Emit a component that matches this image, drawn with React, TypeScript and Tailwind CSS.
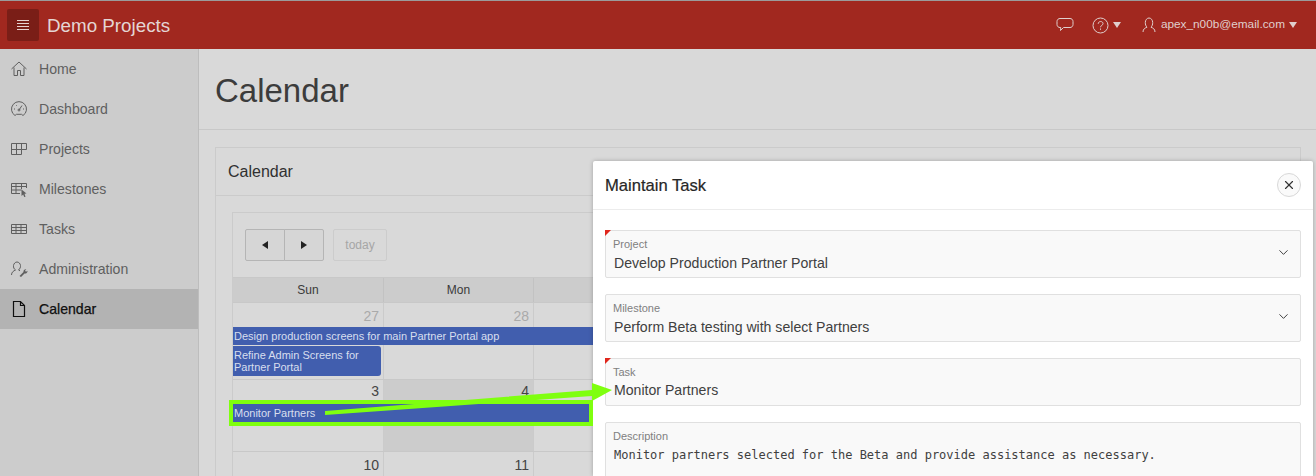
import { ChevronDown, X } from 'lucide-react';
import type { ReactNode } from 'react';

const sans = 'font-["Liberation_Sans",Arial,sans-serif]';

function Icon({ children }: { children: ReactNode }) {
  return (
    <svg width="18" height="18" viewBox="0 0 18 18" fill="none" stroke="currentColor" strokeWidth="1" className="shrink-0">
      {children}
    </svg>
  );
}

const navItems: { label: string; icon: ReactNode; active?: boolean }[] = [
  {
    label: 'Home',
    icon: <Icon><path d="M1.500 9 9 2l7.500 7M4 7.500v8h3.500v-5h3v5H14v-8" /></Icon>,
  },
  {
    label: 'Dashboard',
    icon: <Icon><path d="M5 15.500a7.500 7.500 0 1 1 8 0l-1.500-1.200h-5z" /><path d="M9 10 12 5.500M4 9h1M13 9h1M6 5l.7.7" /><circle cx="9" cy="10" r="1" /></Icon>,
  },
  {
    label: 'Projects',
    icon: <Icon><path d="M1.500 3.500h15v6h-5v5h-10zM1.500 9.500h10M6.500 3.500v11M11.500 3.500v6" /></Icon>,
  },
  {
    label: 'Milestones',
    icon: (
      <Icon>
        <path d="M16.500 8V3.500h-15v10H10M1.500 6.500h15M1.500 10h10M6 3.500v10M11.500 3.500V9" />
        <path d="m11.500 9.500 5 4-2 .3 1 3-1.300.2-1-2.500-1.700 1.500z" fill="currentColor" stroke="none" />
      </Icon>
    ),
  },
  {
    label: 'Tasks',
    icon: <Icon><path d="M1.500 4.500h15v9h-15zM1.500 7.500h15M1.500 10.500h15M6 4.500v9M11 4.500v9" /></Icon>,
  },
  {
    label: 'Administration',
    icon: (
      <Icon>
        <path d="M1.500 15c0-3 2-4 4-5-1.500-1-2.200-2.500-2-4.500.3-2 1.800-3.500 3.500-3.500s3.300 1.500 3.500 3.500c.2 1.700-.5 3.300-2 4.500l1.500.8" />
        <path d="m9.500 16 4-4c-.4-1.500.8-3 2.800-2.800l-1.300 1.500 1 1 1.500-1c.2 2-1.500 3.200-3 2.800l-3.500 3.500z" fill="currentColor" stroke="none" />
      </Icon>
    ),
  },
  {
    label: 'Calendar',
    active: true,
    icon: <Icon><path d="M3.500 1.500h7l4 4v11h-11zM10.500 1.500v4h4" strokeWidth="1.200" /></Icon>,
  },
];

function Sidebar() {
  return (
    <aside className="w-[199px] shrink-0 border-r border-[#bdbdbd] bg-[#cccccc]">
      {navItems.map((item) => (
        <div
          key={item.label}
          className={`flex h-10 items-center gap-[11px] pl-[10px] text-[14.100px] ${item.active ? 'bg-[#b3b3b3] text-[#0f0f0f] [-webkit-text-stroke:0.25px_#0f0f0f]' : 'text-[#5f5f5f]'}`}
        >
          {item.icon}
          <span className="mt-[2px]">{item.label}</span>
        </div>
      ))}
    </aside>
  );
}

function TopBar() {
  return (
    <header className="flex h-[49px] shrink-0 items-center border-t border-[#9b9b9b] bg-[#a1281f] pl-[7px] pr-[19px] text-[#e0cfcd]">
      <button className="flex h-8 w-8 items-center justify-center rounded-[2px] bg-[#7a1e17]">
        <svg width="14" height="12" viewBox="0 0 14 12" stroke="#e6d3d1" strokeWidth="1">
          <path d="M1 1.500h12M1 4.500h12M1 7.500h12M1 10.500h12" />
        </svg>
      </button>
      <span className="ml-2 mt-[2px] text-[18.800px] text-[#e4d6d4]">Demo Projects</span>
      <div className="ml-auto flex items-center">
        <svg width="18" height="16" viewBox="0 0 18 16" fill="none" stroke="currentColor" strokeWidth="1">
          <path d="M4 1.500h10c1.500 0 3 1 3 3v3c0 2-1.500 3-3 3H7.500l-3 3 .3-3H4c-1.500 0-3-1-3-3v-3c0-2 1.500-3 3-3z" />
        </svg>
        <svg className="ml-[18px]" width="17" height="17" viewBox="0 0 17 17" fill="none" stroke="currentColor" strokeWidth="1">
          <circle cx="8.500" cy="8.500" r="7.500" />
          <path d="M6.200 6.800c0-3 4.800-3 4.800-.2 0 1.800-2.500 1.800-2.500 3.700M8.500 11.500v1.300" />
        </svg>
        <span className="ml-[4px] h-0 w-0 border-x-[4px] border-t-[6px] border-x-transparent border-t-[#e0cfcd]" />
        <svg className="ml-[21px]" width="14" height="16" viewBox="0 0 14 16" fill="none" stroke="currentColor" strokeWidth="1">
          <path d="M1 15c0-3 2-4 4-4.800C3.800 9 3.300 7.500 3.300 5.500 3.300 3 5 1 7 1s3.700 2 3.700 4.500c0 2-.5 3.500-1.700 4.700 2 .8 4 1.800 4 4.800" />
        </svg>
        <span className="ml-[5px] text-[11.800px]">apex_n00b@email.com</span>
        <span className="ml-[4px] h-0 w-0 border-x-[4px] border-t-[6px] border-x-transparent border-t-[#e0cfcd]" />
      </div>
    </header>
  );
}

const colStarts = ['col-start-1', 'col-start-2', 'col-start-3', 'col-start-4', 'col-start-5', 'col-start-6', 'col-start-7'];

function Week({ rows, days, today, numTop = 'pt-[5px]', children }: { rows: string; days: string[]; today?: number; numTop?: string; children?: ReactNode }) {
  return (
    <div className={`grid grid-cols-[151px_repeat(6,150px)] border-b border-[#c8c8c8] ${rows}`}>
      {colStarts.map((col, i) => (
        <div key={col} className={`${col} row-start-1 row-span-full border-r border-[#cbcbcb] ${today === i ? 'bg-[#cccccc]' : ''}`} />
      ))}
      {days.map((day, i) => (
        <div
          key={`n${i}`}
          className={`${colStarts[i]} z-10 row-start-1 pr-[5px] text-right text-[14px] leading-[16px] ${numTop} ${day.startsWith('~') ? 'text-[#aaaaaa]' : 'text-[#444444]'}`}
        >
          {day.replace('~', '')}
        </div>
      ))}
      {children}
    </div>
  );
}

function Calendar() {
  return (
    <div className="mx-4 mt-4 w-[1053px] border border-[#cbcbcb]">
      <div className="flex h-[64px] items-start gap-[9px] pl-3 pt-4">
        <div className="flex h-8 text-[#222222]">
          <button className="flex w-10 items-center justify-center rounded-l-[2px] border border-[#b5b5b5] bg-[#d6d6d6]">
            <span className="h-0 w-0 border-y-[4px] border-r-[6px] border-y-transparent border-r-[#222222]" />
          </button>
          <button className="-ml-px flex w-10 items-center justify-center rounded-r-[2px] border border-[#b5b5b5] bg-[#d6d6d6]">
            <span className="h-0 w-0 border-y-[4px] border-l-[6px] border-y-transparent border-l-[#222222]" />
          </button>
        </div>
        <button className="h-8 w-[54px] rounded-[2px] border border-[#cccccc] text-[12px] text-[#a6a6a6]">today</button>
      </div>
      {/* only the columns left of the dialog carry text, the rest is covered */}
      <div className="grid h-[26px] grid-cols-[151px_repeat(6,150px)] border-y border-[#c8c8c8] bg-[#cccccc] text-center text-[12px] leading-[24px] text-[#3a3a3a]">
        {['Sun', 'Mon', '', '', '', '', ''].map((d, i) => (
          <div key={i} className="border-r border-[#c2c2c2]">{d}</div>
        ))}
      </div>
      <Week rows="h-[77px] grid-rows-[24px_18px_1px_30px_1fr]" days={['~27', '~28']}>
        <div className="z-10 col-span-full col-start-1 row-start-2 bg-[#415eae] pl-px text-[11px] leading-[18px] text-[#d8deef]">
          Design production screens for main Partner Portal app
        </div>
        <div className="z-10 col-start-1 row-start-4 mr-[3px] rounded-r-[3px] bg-[#415eae] pl-px pt-[3px] text-[11px] leading-[12px] text-[#d8deef]">
          Refine Admin Screens for Partner Portal
        </div>
      </Week>
      <Week rows="h-[72px] grid-rows-[23px_22px_1fr]" days={['3', '4']} today={1} numTop="pt-[3px]">
        <div className="z-10 col-span-full col-start-1 row-start-2 bg-[#415eae] pl-px text-[11px] leading-[20px] text-[#d8deef]">
          Monitor Partners
        </div>
      </Week>
      <Week rows="h-[72px]" days={['10', '11']} />
    </div>
  );
}

function Field({ label, value, required, select, valueTop }: { label: string; value: string; required?: boolean; select?: boolean; valueTop: string }) {
  return (
    <div className="relative h-12 rounded-[2px] border border-[#e0e0e0] bg-[#f9f9f9] pl-[7px] pt-[7px]">
      {required && (
        <span className="absolute -left-px -top-px h-0 w-0 border-r-[6px] border-t-[6px] border-r-transparent border-t-[#e0261c]" />
      )}
      <div className="text-[11px] leading-[13px] text-[#808080]">{label}</div>
      <div className={`ml-px text-[14.100px] leading-[16px] text-[#404040] ${valueTop}`}>{value}</div>
      {select && <ChevronDown className="absolute right-[9px] top-[14px] text-[#333333]" size={15} strokeWidth={1.500} />}
    </div>
  );
}

function TaskDialog() {
  return (
    <div className="absolute bottom-0 left-[593px] top-[161px] z-20 w-[720px] rounded-t-[2px] bg-white shadow-[0_0_4px_rgba(0,0,0,0.25)]">
      <div className="flex h-[49px] items-center justify-between border-b border-[#ececec] pl-3 pr-3">
        <h2 className="mt-[2px] text-[16.600px] text-[#262626] [-webkit-text-stroke:0.2px_#262626]">Maintain Task</h2>
        <button className="flex h-6 w-6 items-center justify-center rounded-full border border-[#d8d8d8] bg-[#fafafa] text-[#333333]">
          <X size={14} strokeWidth={2} />
        </button>
      </div>
      <div className="flex flex-col gap-4 px-3 pt-5">
        <Field label="Project" value="Develop Production Partner Portal" required select valueTop="mt-[4px]" />
        <Field label="Milestone" value="Perform Beta testing with select Partners" select valueTop="mt-[4px]" />
        <Field label="Task" value="Monitor Partners" required valueTop="mt-[3px]" />
        <div className="relative h-[80px] rounded-[2px] border border-[#e0e0e0] bg-[#f9f9f9] pl-[7px] pt-[7px]">
          <div className="text-[11px] leading-[13px] text-[#808080]">Description</div>
          <div className='ml-px mt-[4px] font-["DejaVu_Sans_Mono",monospace] text-[12px] leading-[16px] text-[#404040]'>
            Monitor partners selected for the Beta and provide assistance as necessary.
          </div>
        </div>
      </div>
    </div>
  );
}

export default function App() {
  return (
    <div className={`relative flex h-[476px] w-[1316px] flex-col overflow-hidden bg-[#d9d9d9] ${sans}`}>
      <TopBar />
      <div className="flex min-h-0 flex-1">
        <Sidebar />
        <main className="min-w-0 flex-1">
          <div className="flex h-[81px] items-center border-b border-[#c8c8c8] pl-4 pt-1">
            <h1 className="text-[33px] text-[#3c3c3c]">Calendar</h1>
          </div>
          <section className="ml-4 mt-[17px] w-[1086px] border border-[#cbcbcb]">
            <div className="flex h-12 items-center border-b border-[#cbcbcb] pl-3 text-[16px] text-[#303030]">Calendar</div>
            <Calendar />
          </section>
        </main>
      </div>
      <TaskDialog />
      {/* green annotation drawn over the screenshot */}
      <div className="absolute left-[229px] top-[400px] z-30 h-[26px] w-[364px] border-4 border-[#7fff0f]" />
      <svg className="absolute left-0 top-0 z-30" width="1316" height="476" fill="#7fff0f">
        <polygon points="325,411 592,390 592,383 612,390 592,401 592,396 325,415" />
      </svg>
    </div>
  );
}
